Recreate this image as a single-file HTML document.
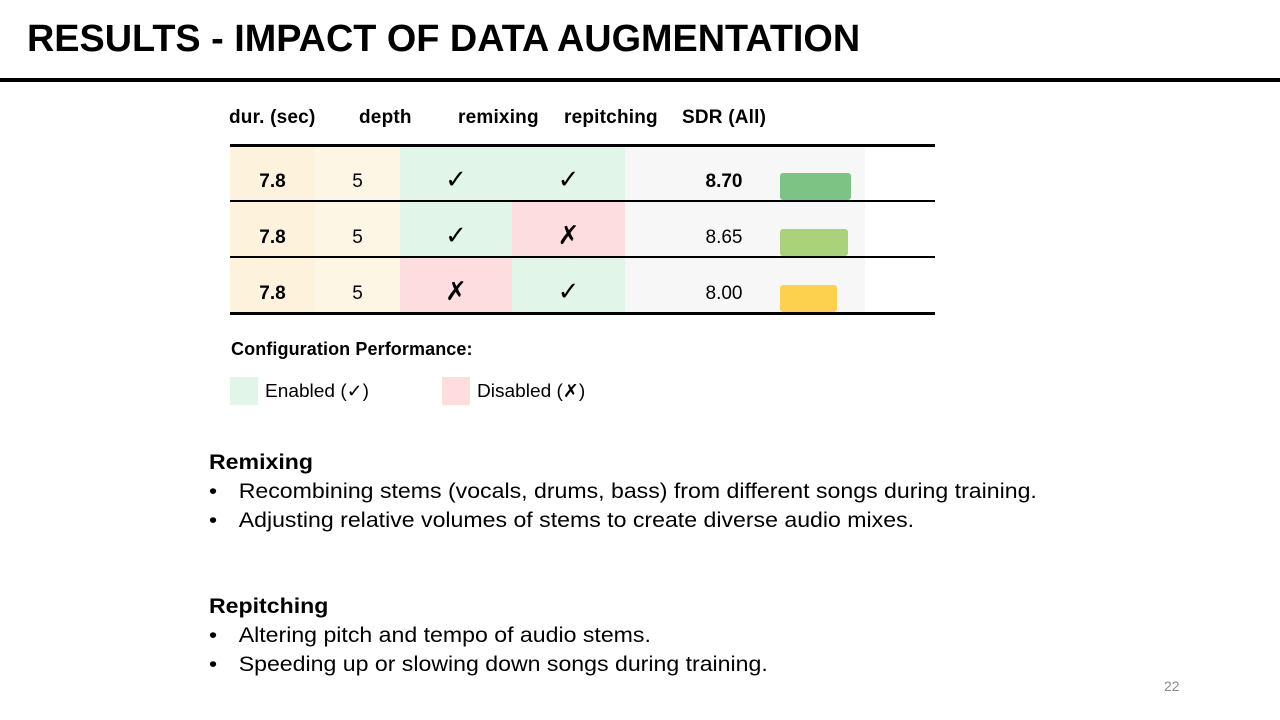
<!DOCTYPE html>
<html><head><style>
body{margin:0;width:1280px;height:720px;background:#fff;position:relative;overflow:hidden;font-family:"Liberation Sans",sans-serif;color:#000}
.a{position:absolute}
h1{position:absolute;left:27px;top:18px;margin:0;font-size:38px;font-weight:bold;transform:scaleX(0.995);transform-origin:0 0}
.hd{position:absolute;top:107px;font-size:19px;font-weight:bold;letter-spacing:0.2px}
.c{position:absolute;display:flex;align-items:center;justify-content:center;font-size:19px}
.ln{position:absolute;left:230px;width:705px;background:#000}
.body{position:absolute;left:209px;font-size:21px;transform:scaleX(1.1);transform-origin:0 0;white-space:nowrap}
.body span{position:absolute;left:27px}
.body b{font-weight:bold}
</style></head><body>
<h1>RESULTS - IMPACT OF DATA AUGMENTATION</h1>
<div class="a" style="left:0;top:78px;width:1280px;height:4px;background:#000"></div>
<div class="hd" style="left:229px">dur. (sec)</div>
<div class="hd" style="left:359px">depth</div>
<div class="hd" style="left:458px">remixing</div>
<div class="hd" style="left:564px">repitching</div>
<div class="hd" style="left:682px">SDR (All)</div>

<div class="a" style="left:230px;top:145px;width:85px;height:168px;background:#fdf2dc"></div>
<div class="a" style="left:315px;top:145px;width:85px;height:168px;background:#fef6e4"></div>
<div class="a" style="left:625px;top:145px;width:240px;height:168px;background:#f7f7f7"></div>
<div class="a" style="left:400px;top:145px;width:112px;height:56px;background:#e1f6e9"></div>
<div class="a" style="left:512px;top:145px;width:113px;height:56px;background:#e1f6e9"></div>
<div class="a" style="left:400px;top:201px;width:112px;height:56px;background:#e1f6e9"></div>
<div class="a" style="left:512px;top:201px;width:113px;height:56px;background:#fedde1"></div>
<div class="a" style="left:400px;top:257px;width:112px;height:56px;background:#fedde1"></div>
<div class="a" style="left:512px;top:257px;width:113px;height:56px;background:#e1f6e9"></div>
<div class="a" style="left:780px;top:173px;width:71px;height:27px;background:#7dc383;border-radius:3px"></div>
<div class="a" style="left:780px;top:229px;width:68px;height:27px;background:#a9d27a;border-radius:3px"></div>
<div class="a" style="left:780px;top:285px;width:57px;height:27px;background:#fdd04e;border-radius:3px"></div>
<div class="ln" style="top:144px;height:3px"></div>
<div class="ln" style="top:200px;height:2px"></div>
<div class="ln" style="top:256px;height:2px"></div>
<div class="ln" style="top:312px;height:3px"></div>

<div class="c" style="left:230px;top:154px;width:85px;height:56px;font-weight:bold">7.8</div>
<div class="c" style="left:315px;top:154px;width:85px;height:56px">5</div>
<div class="c" style="left:400px;top:151px;width:112px;height:56px;font-size:26px">✓</div>
<div class="c" style="left:512px;top:151px;width:113px;height:56px;font-size:26px">✓</div>
<div class="c" style="left:680px;top:154px;width:88px;height:56px;font-weight:bold">8.70</div>

<div class="c" style="left:230px;top:210px;width:85px;height:56px;font-weight:bold">7.8</div>
<div class="c" style="left:315px;top:210px;width:85px;height:56px">5</div>
<div class="c" style="left:400px;top:207px;width:112px;height:56px;font-size:26px">✓</div>
<div class="c" style="left:512px;top:207px;width:113px;height:56px;font-size:26px">✗</div>
<div class="c" style="left:680px;top:210px;width:88px;height:56px">8.65</div>

<div class="c" style="left:230px;top:266px;width:85px;height:56px;font-weight:bold">7.8</div>
<div class="c" style="left:315px;top:266px;width:85px;height:56px">5</div>
<div class="c" style="left:400px;top:263px;width:112px;height:56px;font-size:26px">✗</div>
<div class="c" style="left:512px;top:263px;width:113px;height:56px;font-size:26px">✓</div>
<div class="c" style="left:680px;top:266px;width:88px;height:56px">8.00</div>

<div class="a" style="left:231px;top:339px;font-size:18px;font-weight:bold;letter-spacing:0.1px">Configuration Performance:</div>
<div class="a" style="left:230px;top:377px;width:28px;height:28px;background:#e1f6e9"></div>
<div class="a" style="left:265px;top:381px;font-size:18px;transform:scaleX(1.06);transform-origin:0 0">Enabled (✓)</div>
<div class="a" style="left:442px;top:377px;width:28px;height:28px;background:#fedde1"></div>
<div class="a" style="left:477px;top:381px;font-size:18px;transform:scaleX(1.06);transform-origin:0 0">Disabled (✗)</div>

<div class="body" style="top:451px"><b>Remixing</b></div>
<div class="body" style="top:480px">•<span>Recombining stems (vocals, drums, bass) from different songs during training.</span></div>
<div class="body" style="top:509px">•<span>Adjusting relative volumes of stems to create diverse audio mixes.</span></div>
<div class="body" style="top:595px"><b>Repitching</b></div>
<div class="body" style="top:624px">•<span>Altering pitch and tempo of audio stems.</span></div>
<div class="body" style="top:653px">•<span>Speeding up or slowing down songs during training.</span></div>
<div class="a" style="left:1164px;top:678px;font-size:14px;color:#888">22</div>
</body></html>
